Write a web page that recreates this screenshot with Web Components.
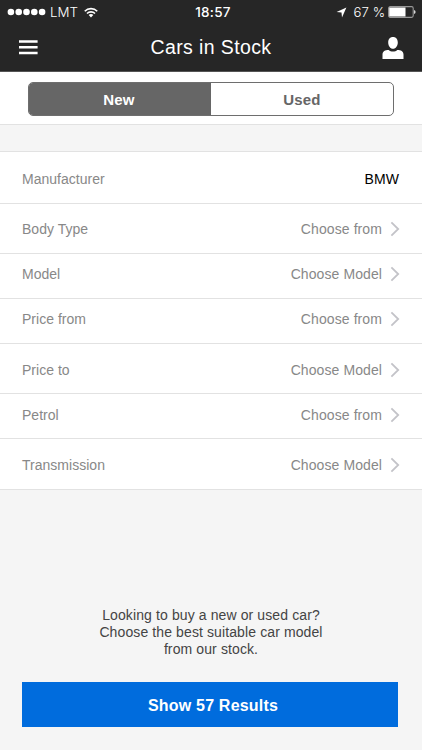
<!DOCTYPE html>
<html lang="en"><head><meta charset="utf-8"><title>Cars in Stock</title>
<style>html,body{margin:0;height:750px;overflow:hidden;background:#f5f5f5}</style></head>
<body><stock-app></stock-app>
<script>
const define = (name, html) => customElements.define(name, class extends HTMLElement {
  constructor() { super(); this.attachShadow({mode: 'open'}).innerHTML = html; }
});

define('status-bar', `<style>
:host{display:grid;grid-template-columns:1fr auto 1fr;height:24px;align-items:center;padding:0 6px 0 7px;color:#fff;font:13.5px Inter,sans-serif}
div{display:flex;align-items:center}svg{display:block;flex:none}
.car{margin-left:4px;font-weight:300;font-size:13.3px}.wifi{margin-left:6px}
.time{font-weight:500;letter-spacing:.25px;padding-left:3px}
.r{justify-content:flex-end}.pct{margin:0 3px 0 7px;font-weight:300;white-space:nowrap;font-size:13.2px}
</style>
<div><svg width="39" height="8"><g fill="#fff"><circle cx="3.9" cy="4" r="3.3"/><circle cx="11.7" cy="4" r="3.3"/><circle cx="19.5" cy="4" r="3.3"/><circle cx="27.3" cy="4" r="3.3"/><circle cx="35.1" cy="4" r="3.3"/></g></svg>
<span class="car">LMT</span>
<svg class="wifi" width="14" height="11" viewBox="0 0 15 11"><g fill="none" stroke="#fff" stroke-width="1.7"><path d="M.8 4.2a9.4 9.4 0 0 1 13.4 0"/><path d="M3.2 6.6a6.1 6.1 0 0 1 8.6 0"/></g><path d="M5 8.3a3.6 3.6 0 0 1 5 0L7.5 10.9z" fill="#fff"/></svg></div>
<span class="time">18:57</span>
<div class="r"><svg width="11" height="11" viewBox="0 0 11 11"><path d="M10.4.6 6 10.4 5.5 5.6.6 5z" fill="#fff"/></svg>
<span class="pct">67 %</span>
<svg width="28" height="12" viewBox="0 0 28 12"><rect x=".6" y=".6" width="24.6" height="10.8" rx="1.6" fill="none" stroke="#999" stroke-width="1.1"/><rect x="1.2" y="1.5" width="16.3" height="9" fill="#fff"/><path d="M26.2 4q1.3.6 1.3 2t-1.3 2z" fill="#fff"/></svg></div>`);

define('nav-bar', `<style>
:host{display:grid;grid-template-columns:1fr auto 1fr;height:48px;align-items:center;padding:0 18px 0 19px;color:#fff;font:19.5px "Liberation Sans",sans-serif;box-sizing:border-box;border-bottom:1px solid #555}
svg{display:block}.user{justify-self:end}h1{font:inherit;margin:0;padding-right:1px;letter-spacing:.38px}
</style>
<svg width="19" height="15" viewBox="0 0 19 15"><path d="M0 1.4h18.6M0 7.2h18.6M0 13h18.6" stroke="#fff" stroke-width="2.5"/></svg>
<h1><slot></slot></h1>
<svg class="user" width="22" height="22" viewBox="0 0 22 22"><path d="M11 0c3 0 4.8 2.2 4.8 5.4S13.8 11.7 11 11.7 6.2 8.6 6.2 5.4 8 0 11 0zM.5 21.9V17.5c0-3.4 2.5-4.5 6.2-4.6 1.1 1 2.6 1.7 4.3 1.7s3.2-.7 4.3-1.7c3.7.1 6.2 1.2 6.2 4.6v4.4z" fill="#fff"/></svg>`);

define('segmented-control', `<style>
:host{display:flex;height:52px;padding:10px 28px 8px;box-sizing:border-box;background:#fff}
.box{flex:1;display:grid;grid-template-columns:1fr 1fr;border:1px solid #6e6e6e;border-radius:5px;overflow:hidden}
span{display:flex;align-items:center;justify-content:center;font:bold 15px "Liberation Sans",sans-serif;letter-spacing:.2px;color:#666}
.on{background:#666;color:#fff;padding-right:2px}
</style><div class="box"><span class="on"><slot name="on"></slot></span><span><slot name="off"></slot></span></div>`);

customElements.define('filter-row', class extends HTMLElement {
  constructor() { super(); this.attachShadow({mode: 'open'}); }
  connectedCallback() {
    const set = this.hasAttribute('chosen');
    this.shadowRoot.innerHTML = `<style>
:host{display:flex;align-items:center;box-sizing:border-box;padding:0 22px;background:#fff;border-bottom:1px solid #e2e2e2;font:14px/16px "Liberation Sans",sans-serif;color:#888}
.l{letter-spacing:.02px}.v{margin-left:auto;letter-spacing:.09px;color:${set ? '#000;padding-right:1px' : '#888'}}svg{margin-left:8px;display:block}
</style><span class="l"><slot></slot></span><span class="v"><slot name="value"></slot></span>
${set ? '' : '<svg width="10" height="16" viewBox="0 0 10 16"><path d="M1.4 1.4 8.2 8 1.4 14.6" fill="none" stroke="#c3c3c8" stroke-width="1.8"/></svg>'}`;
  }
});

define('info-text', `<style>:host{display:block;text-align:center;font:14px/17px "Liberation Sans",sans-serif;letter-spacing:.11px;color:#444}</style><slot></slot>`);

define('primary-button', `<style>:host{display:flex;height:45px;padding:2px 0 0 6px;box-sizing:border-box;align-items:center;justify-content:center;background:#006cdd;color:#fff;font:bold 16px "Liberation Sans",sans-serif;letter-spacing:.2px}</style><slot></slot>`);

define('stock-app', `<style>
:host{display:flex;flex-direction:column;width:422px;height:750px;background:#f5f5f5}
header{background:#262626}
.list{border-top:1px solid #e2e2e2;margin-top:26px}
segmented-control{height:53px;border-bottom:1px solid #e2e2e2}
.tall{height:50px}.short{height:45px}
info-text{margin-top:117px}primary-button{margin:24px 24px 0 22px}
</style>
<header><status-bar></status-bar><nav-bar>Cars in Stock</nav-bar></header>
<segmented-control><span slot="on">New</span><span slot="off">Used</span></segmented-control>
<div class="list">
<filter-row chosen style="height:52px;padding-top:2px">Manufacturer<span slot="value">BMW</span></filter-row>
<filter-row class="tall">Body Type<span slot="value">Choose from</span></filter-row>
<filter-row class="short" style="padding-bottom:4px">Model<span slot="value">Choose Model</span></filter-row>
<filter-row class="short" style="padding-bottom:4px">Price from<span slot="value">Choose from</span></filter-row>
<filter-row class="tall" style="padding-top:2px">Price to<span slot="value">Choose Model</span></filter-row>
<filter-row class="short" style="padding-bottom:2px">Petrol<span slot="value">Choose from</span></filter-row>
<filter-row style="height:51px;padding-top:2px">Transmission<span slot="value">Choose Model</span></filter-row>
</div>
<info-text>Looking to buy a new or used car?<br>Choose the best suitable car model<br>from our stock.</info-text>
<primary-button>Show 57 Results</primary-button>`);
</script></body></html>
